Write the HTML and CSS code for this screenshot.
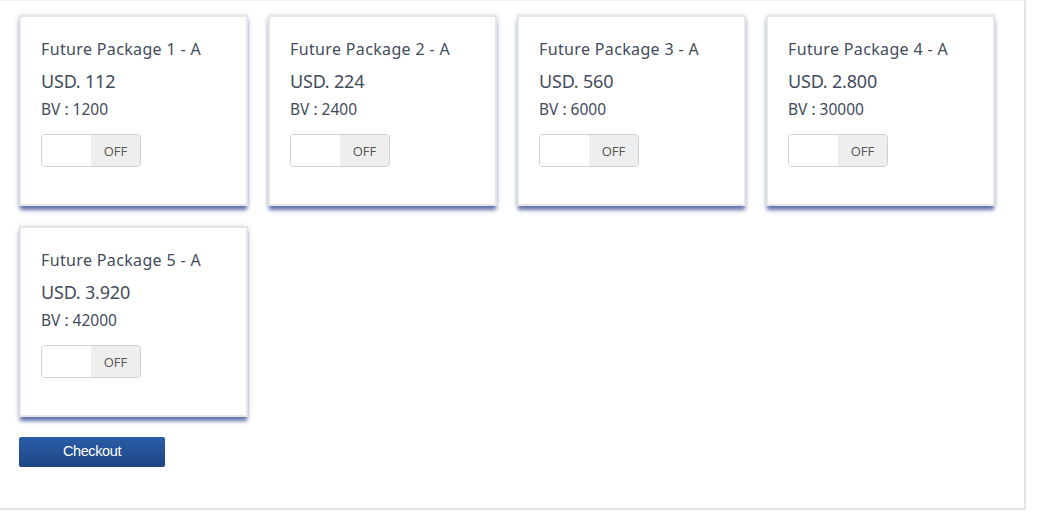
FILE: index.html
```
<!DOCTYPE html>
<html lang="en">
<head>
<meta charset="utf-8">
<title>Packages</title>
<link rel="stylesheet" href="styles.css">
</head>
<body>
<div class="panel">
  <div class="grid">
    <div class="card">
      <div class="title">Future Package 1 - A</div>
      <div class="price">USD. 112</div>
      <div class="bv">BV : 1200</div>
      <div class="toggle"><span class="on"></span><span class="off">OFF</span></div>
    </div>
    <div class="card">
      <div class="title">Future Package 2 - A</div>
      <div class="price">USD. 224</div>
      <div class="bv">BV : 2400</div>
      <div class="toggle"><span class="on"></span><span class="off">OFF</span></div>
    </div>
    <div class="card">
      <div class="title">Future Package 3 - A</div>
      <div class="price">USD. 560</div>
      <div class="bv">BV : 6000</div>
      <div class="toggle"><span class="on"></span><span class="off">OFF</span></div>
    </div>
    <div class="card">
      <div class="title">Future Package 4 - A</div>
      <div class="price">USD. 2.800</div>
      <div class="bv">BV : 30000</div>
      <div class="toggle"><span class="on"></span><span class="off">OFF</span></div>
    </div>
    <div class="card">
      <div class="title">Future Package 5 - A</div>
      <div class="price">USD. 3.920</div>
      <div class="bv">BV : 42000</div>
      <div class="toggle"><span class="on"></span><span class="off">OFF</span></div>
    </div>
  </div>
  <button class="checkout">Checkout</button>
</div>
</body>
</html>
```
FILE: styles.css
```
html, body {
  margin: 0;
  padding: 0;
  background: #ffffff;
}
body {
  font-family: "Noto Sans", "Liberation Sans", sans-serif;
  color: #434c5c;
}
.panel {
  box-sizing: border-box;
  width: 1026px;
  height: 510px;
  border-top: 1px solid #f1f3f6;
  border-right: 2px solid #e4e4e4;
  border-bottom: 2px solid #e4e4e4;
  padding: 14px 0 0 19px;
}
.grid {
  display: grid;
  grid-template-columns: repeat(4, 229px);
  column-gap: 20px;
  row-gap: 20px;
}
.card {
  box-sizing: border-box;
  height: 191px;
  border: 2px solid #e6e6e6;
  background: #fff;
  padding: 21px 20px 0 20px;
  box-shadow: 0 5px 4px -1px rgba(60, 80, 150, 0.8), 0 0 5px rgba(80, 90, 140, 0.2);
}
.title {
  font-size: 16px;
  letter-spacing: 0.35px;
  line-height: 22px;
  height: 22px;
  white-space: nowrap;
}
.price {
  margin-top: 8px;
  font-size: 18px;
  letter-spacing: -0.2px;
  line-height: 26px;
}
.bv {
  margin-top: 3px;
  font-size: 15.5px;
  line-height: 24px;
}
.toggle {
  margin-top: 13px;
  box-sizing: border-box;
  width: 100px;
  height: 33px;
  border: 1px solid #cfcfcf;
  border-radius: 4px;
  display: flex;
  overflow: hidden;
}
.toggle .on {
  flex: 0 0 49px;
  background: #fff;
}
.toggle .off {
  flex: 1;
  background: #eeeeee;
  font-family: "Open Sans", "Noto Sans", sans-serif;
  font-size: 13px;
  color: #555;
  display: flex;
  align-items: center;
  justify-content: center;
}
.checkout {
  display: block;
  margin-top: 20px;
  width: 146px;
  height: 30px;
  border: none;
  border-radius: 2px;
  background: linear-gradient(#2a5da6, #1d4585);
  color: #fff;
  font-family: "Liberation Sans", Arial, sans-serif;
  font-size: 14.5px;
  letter-spacing: -0.4px;
  padding: 0 0 2px 0;
}
```
